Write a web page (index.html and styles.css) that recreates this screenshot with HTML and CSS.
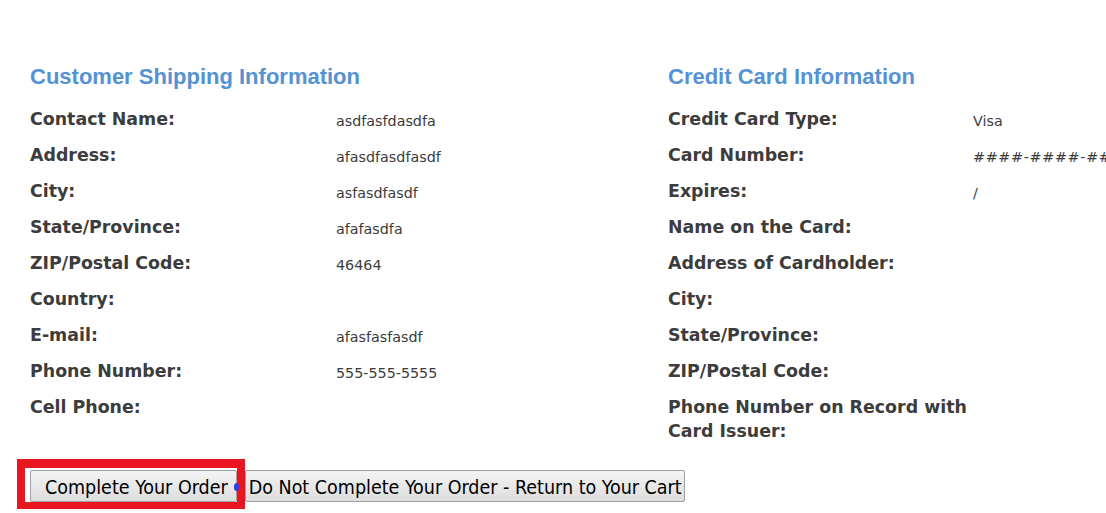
FILE: index.html
```html
<!DOCTYPE html>
<html>
<head>
<meta charset="utf-8">
<link rel="stylesheet" href="styles.css">
</head>
<body>
<div class="page">
  <div class="columns">
    <section class="col col-left">
      <h2 class="heading">Customer Shipping Information</h2>
      <div class="rows">
        <div class="label">Contact Name:</div><div class="value">asdfasfdasdfa</div>
        <div class="label">Address:</div><div class="value">afasdfasdfasdf</div>
        <div class="label">City:</div><div class="value">asfasdfasdf</div>
        <div class="label">State/Province:</div><div class="value">afafasdfa</div>
        <div class="label">ZIP/Postal Code:</div><div class="value">46464</div>
        <div class="label">Country:</div><div class="value"></div>
        <div class="label">E-mail:</div><div class="value">afasfasfasdf</div>
        <div class="label">Phone Number:</div><div class="value">555-555-5555</div>
        <div class="label">Cell Phone:</div><div class="value"></div>
      </div>
    </section>
    <section class="col col-right">
      <h2 class="heading">Credit Card Information</h2>
      <div class="rows rows-right">
        <div class="label">Credit Card Type:</div><div class="value">Visa</div>
        <div class="label">Card Number:</div><div class="value mono">####-####-####-####</div>
        <div class="label">Expires:</div><div class="value">/</div>
        <div class="label">Name on the Card:</div><div class="value"></div>
        <div class="label">Address of Cardholder:</div><div class="value"></div>
        <div class="label">City:</div><div class="value"></div>
        <div class="label">State/Province:</div><div class="value"></div>
        <div class="label">ZIP/Postal Code:</div><div class="value"></div>
        <div class="label wrap">Phone Number on Record with Card Issuer:</div><div class="value"></div>
      </div>
    </section>
  </div>
  <div class="actions">
    <div class="highlight">
      <button class="btn btn-complete" type="button">Complete Your Order</button>
    </div>
    <span class="dot"></span>
    <button class="btn btn-return" type="button">Do Not Complete Your Order - Return to Your Cart</button>
  </div>
</div>
</body>
</html>
```

FILE: styles.css
```css
html, body {
  margin: 0;
  padding: 0;
  background: #ffffff;
  overflow: hidden;
}

.page {
  width: 1106px;
  height: 513px;
  padding: 61px 0 0 30px;
  box-sizing: border-box;
  font-family: "DejaVu Sans", Verdana, sans-serif;
  color: #3c3c3c;
}

.columns {
  display: grid;
  grid-template-columns: 638px 1fr;
}

.heading {
  margin: 0 0 15px 0;
  font-family: "Liberation Sans", Arial, sans-serif;
  font-weight: bold;
  font-size: 22px;
  line-height: 32px;
  color: #5592d4;
  white-space: nowrap;
}

.rows {
  display: grid;
  grid-template-columns: 306px 1fr;
  grid-auto-rows: minmax(36px, auto);
}

.rows-right {
  grid-template-columns: 305px 1fr;
}

.label {
  font-weight: bold;
  font-size: 17.4px;
  line-height: 22px;
  color: #3c3c3c;
  white-space: nowrap;
}

.label.wrap {
  white-space: normal;
  width: 305px;
  line-height: 24px;
  margin-top: -1px;
}

.value {
  font-size: 14.3px;
  line-height: 22px;
  padding-top: 2px;
  color: #3c3c3c;
  white-space: nowrap;
  overflow: hidden;
}

.mono {
  letter-spacing: 0.7px;
}

.actions {
  display: flex;
  align-items: flex-start;
  margin: 16px 0 0 -13px;
}

.highlight {
  border: 8px solid #e8161f;
  border-top-width: 9px;
  border-bottom-width: 7px;
  padding: 2px 0 0 5px;
  display: flex;
}

.btn {
  font-family: "DejaVu Sans Condensed", "DejaVu Sans", sans-serif;
  font-size: 19.5px;
  color: #000000;
  background: linear-gradient(#f4f4f4, #dddddd);
  border: 1px solid #a0a0a0;
  border-radius: 2px;
  height: 32px;
  margin: 0;
}

.btn-complete {
  padding: 2px 8px 0 14px;
}

.btn-return {
  padding: 2px 2px 0 3px;
  margin-left: -1px;
  margin-top: 11px;
}

.dot {
  width: 5px;
  height: 8px;
  border-radius: 50%;
  background: #2a3fe0;
  margin: 24px 7px 0 -11px;
  position: relative;
  z-index: 1;
}
```
